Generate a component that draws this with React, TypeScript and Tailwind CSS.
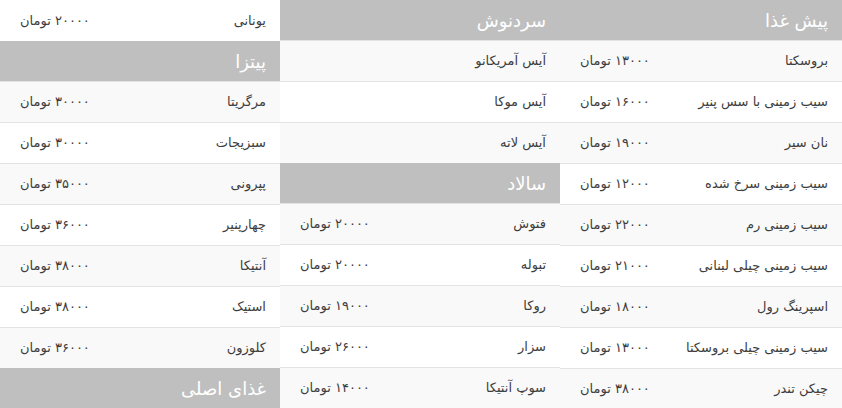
type Row =
  | { kind: 'header'; title: string }
  | { kind: 'item'; name: string; price?: string; striped: boolean };

const h = (title: string): Row => ({ kind: 'header', title });
const it = (name: string, price: string | undefined, striped: boolean): Row => ({
  kind: 'item',
  name,
  price,
  striped,
});

// columns are listed right to left (page is rtl)
const COLUMNS: Row[][] = [
  [
    h('پیش غذا'),
    it('بروسکتا', '۱۳۰۰۰ تومان', true),
    it('سیب زمینی با سس پنیر', '۱۶۰۰۰ تومان', false),
    it('نان سیر', '۱۹۰۰۰ تومان', true),
    it('سیب زمینی سرخ شده', '۱۲۰۰۰ تومان', false),
    it('سیب زمینی رم', '۲۲۰۰۰ تومان', true),
    it('سیب زمینی چیلی لبنانی', '۲۱۰۰۰ تومان', false),
    it('اسپرینگ رول', '۱۸۰۰۰ تومان', true),
    it('سیب زمینی چیلی بروسکتا', '۱۳۰۰۰ تومان', false),
    it('چیکن تندر', '۳۸۰۰۰ تومان', true),
  ],
  [
    h('سردنوش'),
    it('آیس آمریکانو', undefined, true),
    it('آیس موکا', undefined, false),
    it('آیس لاته', undefined, true),
    h('سالاد'),
    it('فتوش', '۲۰۰۰۰ تومان', true),
    it('تبوله', '۲۰۰۰۰ تومان', false),
    it('روکا', '۱۹۰۰۰ تومان', true),
    it('سزار', '۲۶۰۰۰ تومان', false),
    it('سوپ آنتیکا', '۱۴۰۰۰ تومان', true),
  ],
  [
    it('یونانی', '۲۰۰۰۰ تومان', false),
    h('پیتزا'),
    it('مرگریتا', '۳۰۰۰۰ تومان', true),
    it('سبزیجات', '۳۰۰۰۰ تومان', false),
    it('پپرونی', '۳۵۰۰۰ تومان', true),
    it('چهارپنیر', '۳۶۰۰۰ تومان', false),
    it('آنتیکا', '۳۸۰۰۰ تومان', true),
    it('استیک', '۳۸۰۰۰ تومان', false),
    it('کلوزون', '۳۶۰۰۰ تومان', true),
    h('غذای اصلی'),
  ],
];

function MenuRow({ row }: { row: Row }) {
  if (row.kind === 'header') {
    return (
      <div className="h-[40px] shrink-0 flex items-center px-[14px] bg-[#bfbfbf] text-white text-[18px]">
        {row.title}
      </div>
    );
  }
  return (
    <div
      className={`h-[41px] shrink-0 flex items-center justify-between pr-[14px] pl-[20px] border-t border-[#e3e3e3] first:border-t-0 text-[13px] text-[#3d3d3d] ${
        row.striped ? 'bg-[#f9f9f9]' : 'bg-white'
      }`}
    >
      <span>{row.name}</span>
      {row.price && <span>{row.price}</span>}
    </div>
  );
}

export default function App() {
  return (
    <div
      dir="rtl"
      className="w-[842px] h-[408px] overflow-hidden bg-white grid grid-cols-[282px_280px_280px]"
      style={{ fontFamily: '"DejaVu Sans", "Noto Sans", sans-serif' }}
    >
      {COLUMNS.map((col, i) => (
        <div key={i} className="flex flex-col">
          {col.map((row, j) => (
            <MenuRow key={j} row={row} />
          ))}
        </div>
      ))}
    </div>
  );
}
